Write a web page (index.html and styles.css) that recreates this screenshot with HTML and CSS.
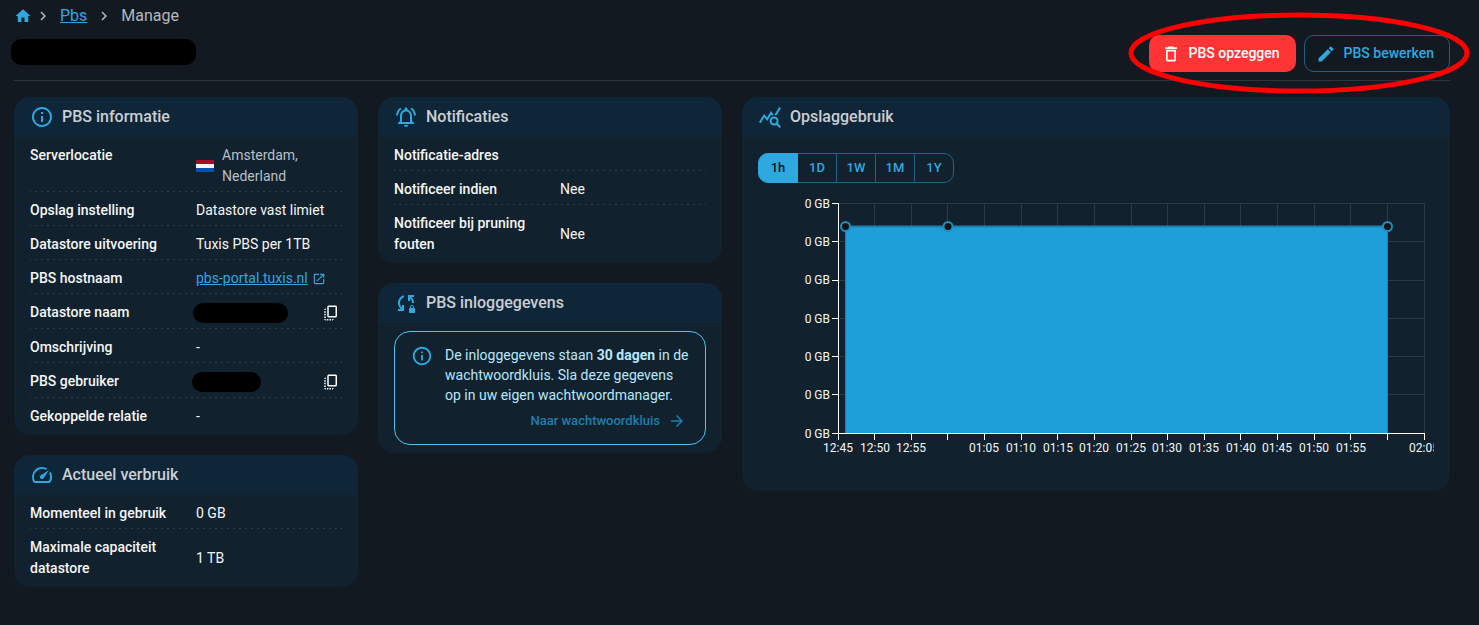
FILE: index.html
```html
<!DOCTYPE html>
<html lang="nl">
<head>
<meta charset="utf-8">
<title>PBS</title>
<link rel="stylesheet" href="styles.css">
</head>
<body>
<main class="page">
  <nav class="breadcrumbs">
    <a class="home" href="#"><svg class="icon-18" viewBox="0 0 24 24"><path d="M10 20v-6h4v6h5v-8h3L12 3 2 12h3v8z"/></svg></a>
    <svg class="icon-18 sep" viewBox="0 0 24 24"><path d="M10 6 8.590 7.410 13.170 12l-4.580 4.590L10 18l6-6z"/></svg>
    <a class="link" href="#">Pbs</a>
    <svg class="icon-18 sep" viewBox="0 0 24 24"><path d="M10 6 8.590 7.410 13.170 12l-4.580 4.590L10 18l6-6z"/></svg>
    <span>Manage</span>
  </nav>

  <header class="page-head">
    <span class="bar bar-title"></span>
    <div class="actions">
      <button class="btn btn-danger" type="button"><svg class="icon-20" viewBox="0 0 24 24"><path d="M6 19c0 1.100.9 2 2 2h8c1.100 0 2-.9 2-2V7H6v12zM8 9h8v10H8V9zm7.500-5-1-1h-5l-1 1H5v2h14V4h-3.500z"/></svg>PBS opzeggen</button>
      <button class="btn btn-outline" type="button"><svg class="icon-20" viewBox="0 0 24 24"><path d="M3 17.250V21h3.750L17.810 9.940l-3.750-3.750L3 17.250zM20.710 7.040c.39-.39.39-1.020 0-1.410l-2.340-2.340a1 1 0 0 0-1.410 0l-1.830 1.830 3.750 3.750 1.830-1.830z"/></svg>PBS bewerken</button>
      <svg class="marker" viewBox="0 0 342 84"><ellipse cx="171" cy="42" rx="168" ry="38"/></svg>
    </div>
  </header>

  <div class="grid">
    <div class="column">
      <section class="card">
        <h2 class="card-head"><svg class="icon-24" viewBox="0 0 24 24"><path d="M11 7h2v2h-2zm0 4h2v6h-2zm1-9C6.480 2 2 6.480 2 12s4.480 10 10 10 10-4.480 10-10S17.520 2 12 2zm0 18c-4.410 0-8-3.590-8-8s3.590-8 8-8 8 3.590 8 8-3.590 8-8 8z"/></svg>PBS informatie</h2>
        <dl class="rows">
          <div class="row"><dt>Serverlocatie</dt><dd class="location"><svg class="flag" viewBox="0 0 18 12"><path fill="#a50e22" d="M0 0h18v4H0z"/><path fill="#f4f4f4" d="M0 4h18v4H0z"/><path fill="#0b4fb3" d="M0 8h18v4H0z"/></svg><span>Amsterdam, Nederland</span></dd></div>
          <div class="row"><dt>Opslag instelling</dt><dd>Datastore vast limiet</dd></div>
          <div class="row"><dt>Datastore uitvoering</dt><dd>Tuxis PBS per 1TB</dd></div>
          <div class="row"><dt>PBS hostnaam</dt><dd><a class="link" href="#">pbs-portal.tuxis.nl</a><svg class="icon-14" viewBox="0 0 24 24"><path d="M19 19H5V5h7V3H5c-1.110 0-2 .9-2 2v14c0 1.100.89 2 2 2h14c1.100 0 2-.9 2-2v-7h-2v7zM14 3v2h3.590l-9.830 9.830 1.410 1.410L19 6.410V10h2V3h-7z"/></svg></dd></div>
          <div class="row"><dt>Datastore naam</dt><dd class="secret"><span class="bar bar-name"></span><button class="copy" type="button" aria-label="Kopieer"><svg class="icon-18" viewBox="0 0 24 24"><path d="M18 2H9c-1.100 0-2 .9-2 2v12c0 1.100.9 2 2 2h9c1.100 0 2-.9 2-2V4c0-1.100-.9-2-2-2zm0 14H9V4h9v12zM3 15v-2h2v2H3zm0-5.500h2v2H3v-2zM10 20h2v2h-2v-2zm-7-1.500v-2h2v2H3zM5 22c-1.100 0-2-.9-2-2h2v2zm3.500 0h-2v-2h2v2zm5 0v-2h2c0 1.100-.9 2-2 2zM5 6v2H3c0-1.100.9-2 2-2z"/></svg></button></dd></div>
          <div class="row"><dt>Omschrijving</dt><dd>-</dd></div>
          <div class="row"><dt>PBS gebruiker</dt><dd class="secret"><span class="bar bar-user"></span><button class="copy" type="button" aria-label="Kopieer"><svg class="icon-18" viewBox="0 0 24 24"><path d="M18 2H9c-1.100 0-2 .9-2 2v12c0 1.100.9 2 2 2h9c1.100 0 2-.9 2-2V4c0-1.100-.9-2-2-2zm0 14H9V4h9v12zM3 15v-2h2v2H3zm0-5.500h2v2H3v-2zM10 20h2v2h-2v-2zm-7-1.500v-2h2v2H3zM5 22c-1.100 0-2-.9-2-2h2v2zm3.500 0h-2v-2h2v2zm5 0v-2h2c0 1.100-.9 2-2 2zM5 6v2H3c0-1.100.9-2 2-2z"/></svg></button></dd></div>
          <div class="row"><dt>Gekoppelde relatie</dt><dd>-</dd></div>
        </dl>
      </section>

      <section class="card">
        <h2 class="card-head"><svg class="icon-24" viewBox="0 0 24 24"><path d="m20.380 8.570-1.230 1.850a8 8 0 0 1-.22 7.580H5.070A8 8 0 0 1 15.580 6.850l1.850-1.230A10 10 0 0 0 3.350 19a2 2 0 0 0 1.720 1h13.850a2 2 0 0 0 1.740-1 10 10 0 0 0-.27-10.440zm-9.790 6.840a2 2 0 0 0 2.830 0l5.660-8.490-8.490 5.660a2 2 0 0 0 0 2.830z"/></svg>Actueel verbruik</h2>
        <dl class="rows">
          <div class="row"><dt>Momenteel in gebruik</dt><dd>0 GB</dd></div>
          <div class="row"><dt>Maximale capaciteit datastore</dt><dd>1 TB</dd></div>
        </dl>
      </section>
    </div>

    <div class="column">
      <section class="card">
        <h2 class="card-head"><svg class="icon-24" viewBox="0 0 24 24"><path d="M12 22c1.100 0 2-.9 2-2h-4c0 1.100.9 2 2 2zm6-6v-5c0-3.070-1.630-5.640-4.500-6.320V4c0-.83-.67-1.500-1.500-1.500s-1.500.67-1.500 1.500v.68C7.640 5.360 6 7.920 6 11v5l-2 2v1h16v-1l-2-2zm-2 1H8v-6c0-2.480 1.510-4.500 4-4.500s4 2.020 4 4.500v6zM7.580 4.080 6.150 2.650C3.750 4.480 2.170 7.300 2.030 10.500h2c.15-2.650 1.510-4.970 3.550-6.420zm12.390 6.420h2c-.15-3.200-1.730-6.020-4.120-7.850l-1.420 1.430c2.020 1.450 3.390 3.770 3.540 6.420z"/></svg>Notificaties</h2>
        <dl class="rows">
          <div class="row"><dt>Notificatie-adres</dt><dd></dd></div>
          <div class="row"><dt>Notificeer indien</dt><dd>Nee</dd></div>
          <div class="row"><dt>Notificeer bij pruning fouten</dt><dd>Nee</dd></div>
        </dl>
      </section>

      <section class="card">
        <h2 class="card-head"><svg class="icon-24" viewBox="0 0 24 24"><path d="M10 4.260v2.090C7.670 7.180 6 9.390 6 12c0 1.770.78 3.340 2 4.440V14h2v6H4v-2h2.730C5.060 16.540 4 14.400 4 12c0-3.730 2.550-6.850 6-7.740zM20 4h-6v6h2V7.560c1.220 1.100 2 2.670 2 4.440h2c0-2.400-1.060-4.540-2.730-6H20V4zm0 13v-1c0-1.100-.9-2-2-2s-2 .9-2 2v1c-.55 0-1 .45-1 1v3c0 .55.45 1 1 1h4c.55 0 1-.45 1-1v-3c0-.55-.45-1-1-1zm-1 0h-2v-1c0-.55.45-1 1-1s1 .45 1 1v1z"/></svg>PBS inloggegevens</h2>
        <div class="alert-wrap">
          <div class="alert">
            <svg class="icon-22" viewBox="0 0 24 24"><path d="M11 7h2v2h-2zm0 4h2v6h-2zm1-9C6.480 2 2 6.480 2 12s4.480 10 10 10 10-4.480 10-10S17.520 2 12 2zm0 18c-4.410 0-8-3.590-8-8s3.590-8 8-8 8 3.590 8 8-3.590 8-8 8z"/></svg>
            <div class="alert-body">
              <p>De inloggegevens staan <strong>30 dagen</strong> in de wachtwoordkluis. Sla deze gegevens op in uw eigen wachtwoordmanager.</p>
              <a class="vault-link" href="#">Naar wachtwoordkluis<svg class="icon-18" viewBox="0 0 24 24"><path d="m12 4-1.410 1.410L16.170 11H4v2h12.170l-5.580 5.590L12 20l8-8z"/></svg></a>
            </div>
          </div>
        </div>
      </section>
    </div>

    <section class="card wide">
      <h2 class="card-head"><svg class="icon-24" viewBox="0 0 24 24"><path d="M19.880 18.470c.44-.7.7-1.510.7-2.390 0-2.490-2.010-4.500-4.500-4.500s-4.500 2.010-4.500 4.500 2.010 4.500 4.490 4.500c.88 0 1.700-.26 2.390-.7L21.580 23 23 21.580l-3.120-3.110zm-3.800.11c-1.380 0-2.500-1.120-2.500-2.500s1.120-2.500 2.500-2.500 2.500 1.120 2.500 2.500-1.120 2.500-2.500 2.500zm-.36-8.500c-.74.02-1.450.18-2.100.45l-.55-.83-3.800 6.180-3.010-3.520-3.630 5.810L1 17l5-8 3 3.500L13 6l2.720 4.080zm2.590.5c-.64-.28-1.330-.45-2.050-.49L21.380 2 23 3.180l-4.690 7.400z"/></svg>Opslaggebruik</h2>
      <div class="chart-body">
        <div class="toggle" role="group">
          <button type="button" class="on" aria-pressed="true">1h</button><button type="button">1D</button><button type="button">1W</button><button type="button">1M</button><button type="button">1Y</button>
        </div>
        <svg class="chart" viewBox="0 0 676 282">
          <path class="gridline" d="M80 10.500h587M80 48.500h587M80 87.500h587M80 125.500h587M80 163.500h587M80 201.500h587M116.500 10v230M153.500 10v230M189.500 10v230M226.500 10v230M263.500 10v230M299.500 10v230M336.500 10v230M373.500 10v230M409.500 10v230M446.500 10v230M482.500 10v230M519.500 10v230M556.500 10v230M592.500 10v230M629.500 10v230M666.500 10v230"/>
          <path class="area" d="M87.500 33.500H629.500V240.500H87.500z"/>
          <path class="area-line" d="M87.500 33.500H629.500"/>
          <path class="area-side" d="M87.500 33.500V240M629.500 33.500V240"/>
          <path class="axis" d="M80.500 10v237M74 240.500h593M74 10.500h6M74 48.500h6M74 87.500h6M74 125.500h6M74 163.500h6M74 201.500h6M116.500 241v6M153.500 241v6M189.500 241v6M226.500 241v6M263.500 241v6M299.500 241v6M336.500 241v6M373.500 241v6M409.500 241v6M446.500 241v6M482.500 241v6M519.500 241v6M556.500 241v6M592.500 241v6M629.500 241v6M666.500 241v6"/>
          <circle class="dot" cx="87.500" cy="33.500" r="4.500"/><circle class="dot" cx="190" cy="33.500" r="4.500"/><circle class="dot" cx="629.500" cy="33.500" r="4.500"/>
          <g class="y-labels"><text x="72" y="15">0 GB</text><text x="72" y="53">0 GB</text><text x="72" y="91">0 GB</text><text x="72" y="130">0 GB</text><text x="72" y="168">0 GB</text><text x="72" y="206">0 GB</text><text x="72" y="245">0 GB</text></g>
          <g class="x-labels"><text x="80" y="259">12:45</text><text x="117" y="259">12:50</text><text x="153" y="259">12:55</text><text x="226" y="259">01:05</text><text x="263" y="259">01:10</text><text x="300" y="259">01:15</text><text x="336" y="259">01:20</text><text x="373" y="259">01:25</text><text x="409" y="259">01:30</text><text x="446" y="259">01:35</text><text x="483" y="259">01:40</text><text x="519" y="259">01:45</text><text x="556" y="259">01:50</text><text x="593" y="259">01:55</text><text x="666" y="259">02:05</text></g>
        </svg>
      </div>
    </section>
  </div>
</main>
</body>
</html>
```

FILE: styles.css
```css
* { box-sizing: border-box; }

body {
  margin: 0;
  background: #121921;
  color: #f5f6f7;
  font: 14px/21px Roboto, "Liberation Sans", sans-serif;
}

.page { padding: 4px 29px 20px 14px; }

svg { flex: none; fill: currentColor; }
button { font: inherit; color: inherit; background: none; border: 0; cursor: pointer; }
.icon-14 { width: 14px; height: 14px; }
.icon-18 { width: 18px; height: 18px; }
.icon-20 { width: 20px; height: 20px; }
.icon-22 { width: 22px; height: 22px; }
.icon-24 { width: 24px; height: 24px; }

.link { color: #2ea9e0; text-decoration: underline; }

.breadcrumbs {
  display: flex;
  align-items: center;
  gap: 8px;
  font-size: 16px;
  line-height: 24px;
  color: #b5b8bb;
}
.home { display: flex; color: #2ea9e0; margin-right: -6px; }

.page-head {
  display: flex;
  align-items: flex-start;
  justify-content: space-between;
  margin: 7px 0 16px;
  padding-bottom: 8px;
  border-bottom: 1px solid #2e343b;
}
.actions { position: relative; display: flex; gap: 8px; }
.btn {
  display: flex;
  align-items: center;
  gap: 8px;
  padding: 5px 15px 5px 11px;
  border: 1px solid transparent;
  border-radius: 10px;
  font-weight: 500;
  line-height: 25px;
}
.btn-danger { background: #ff3535; color: #fff; }
.btn-outline { border-color: #1f5f80; color: #2ea9e0; }
.marker {
  position: absolute;
  width: 342px;
  height: 84px;
  right: -20px;
  top: -24px;
  fill: none;
  stroke: #f00;
  stroke-width: 5;
  pointer-events: none;
}

.bar { background: #000; border-radius: 10px; height: 20px; }
.bar-title { width: 185px; height: 26px; margin: 4px 0 0 -3px; }
.bar-name { width: 95px; margin-left: -3px; }
.bar-user { width: 69px; margin-left: -4px; }

.grid {
  display: grid;
  grid-template-columns: repeat(4, minmax(0, 1fr));
  gap: 20px;
  align-items: start;
}
.column { display: grid; gap: 20px; }
.wide { grid-column: span 2; }

.card { background: #11212e; border-radius: 16px; overflow: hidden; }
.card-head {
  display: flex;
  align-items: center;
  gap: 8px;
  margin: 0;
  padding: 8px 16px;
  background: #0f2639;
  color: #cbced3;
  font-size: 16px;
  font-weight: 500;
  line-height: 24px;
}
.card-head svg { color: #2ea9e0; }

.rows { margin: 0; padding: 0 16px 4px; }
.row {
  display: grid;
  grid-template-columns: minmax(0, 1fr) minmax(0, 1fr);
  column-gap: 20px;
  padding: 8px 0 5px;
  background: repeating-linear-gradient(90deg, #2d3c48 0 1px, transparent 1px 5px, #2d3c48 5px 6px) bottom / 100% 1px no-repeat;
}
.row:last-child { background: none; padding-bottom: 4px; }
.row dt { font-weight: 500; }
.row dd { display: flex; align-items: center; gap: 4px; margin: 0; }
.row .icon-14 { color: #2ea9e0; }
.row .location { gap: 8px; color: #b9bfc4; }
.flag { width: 18px; height: 12px; }
.row .secret { justify-content: space-between; }
.copy { display: flex; padding: 2px; color: #fff; }

.alert-wrap { padding: 8px 16px; }
.alert {
  display: flex;
  gap: 12px;
  padding: 13px 16px;
  border: 1px solid #4fc3f7;
  border-radius: 16px;
  color: #b8e7fb;
  line-height: 20px;
}
.alert > svg { color: #29a9e6; }
.alert p { margin: 0 0 6px; }
.alert strong { font-weight: 700; }
.alert-body { flex: 1; min-width: 0; }
.vault-link {
  display: flex;
  align-items: center;
  justify-content: flex-end;
  gap: 8px;
  padding-right: 3px;
  color: #1d7fac;
  font-size: 13px;
  font-weight: 500;
  text-decoration: none;
}

.chart-body { padding: 16px; }
.toggle { display: flex; }
.toggle button {
  width: 40px;
  margin-left: -1px;
  padding: 0;
  border: 1px solid #1d6386;
  color: #2ea9e0;
  font-size: 13px;
  font-weight: 500;
  line-height: 28px;
}
.toggle button:first-child { margin-left: 0; border-radius: 10px 0 0 10px; }
.toggle button:last-child { border-radius: 0 10px 10px 0; }
.toggle .on { position: relative; border-color: #2ea9e0; background: #2ea9e0; color: #0b1218; }

.chart { display: block; width: 100%; margin-top: 10px; overflow: hidden; }
.gridline { fill: none; stroke: #2c3a44; }
.area { fill: #1f9fd9; }
.area-line { fill: none; stroke: #1b80ad; stroke-width: 2; }
.area-side { fill: none; stroke: #1b80ad; }
.axis { fill: none; stroke: #fff; }
.dot { fill: #111417; stroke: #1b8ec2; stroke-width: 2; }
.y-labels, .x-labels { font-size: 12px; fill: #f5f6f7; }
.y-labels { text-anchor: end; }
.x-labels { text-anchor: middle; }
```
